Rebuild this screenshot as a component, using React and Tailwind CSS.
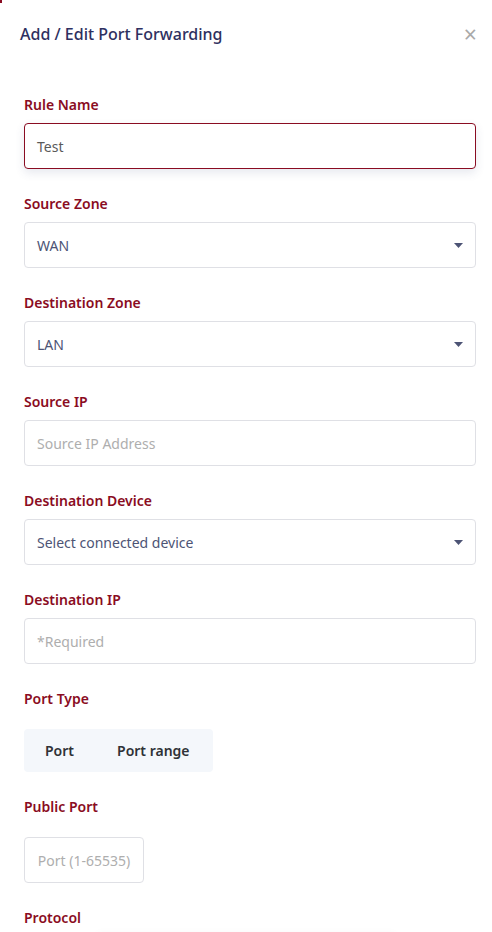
const Label = ({ children, className = "" }) => (
  <label className={`block text-[14px] font-semibold leading-5 text-[#8a0c22] ${className}`}>
    {children}
  </label>
);

const Caret = () => (
  <svg width="9" height="5" viewBox="0 0 9 5" className="text-[#4d5475]">
    <path d="M0 0h9L4.5 5z" fill="currentColor" />
  </svg>
);

const TextField = ({ placeholder, value, active }) => (
  <div
    className={`h-[46px] w-full rounded-[4px] border bg-white px-[12px] flex items-center text-[14px] ${
      active
        ? "border-[#8a0c22] shadow-[0_4px_10px_rgba(60,70,120,0.12)]"
        : "border-[#dfe0e5]"
    }`}
  >
    {value ? (
      <span className="text-[#5a5a5a]">{value}</span>
    ) : (
      <span className="text-[#aeaeae]">{placeholder}</span>
    )}
  </div>
);

const SelectField = ({ value }) => (
  <div className="h-[46px] w-full rounded-[4px] border border-[#dfe0e5] bg-white px-[12px] flex items-center justify-between text-[14px]">
    <span className="text-[#4d5475]">{value}</span>
    <Caret />
  </div>
);

const Field = ({ label, children }) => (
  <div className="flex flex-col gap-[8px]">
    <Label>{label}</Label>
    {children}
  </div>
);

export default function App() {
  return (
    <div
      className="relative h-[932px] w-full overflow-hidden bg-white"
      style={{ fontFamily: '"Noto Sans", "Open Sans", sans-serif' }}
    >
      <div className="absolute left-0 top-0 h-[3px] w-[2px] bg-[#8a0c22]" />

      <div className="flex items-center justify-between pl-[20px] pr-[15px] pt-[22px]">
        <h2 className="text-[16px] font-medium leading-6 text-[#2e3060]">
          Add / Edit Port Forwarding
        </h2>
        <button className="text-[23px] leading-none text-[#a9a9a9]">×</button>
      </div>

      <div className="flex flex-col gap-[25px] pt-[49px] pl-[24px] pr-[16px]">
        <Field label="Rule Name">
          <TextField value="Test" active />
        </Field>
        <Field label="Source Zone">
          <SelectField value="WAN" />
        </Field>
        <Field label="Destination Zone">
          <SelectField value="LAN" />
        </Field>
        <Field label="Source IP">
          <TextField placeholder="Source IP Address" />
        </Field>
        <Field label="Destination Device">
          <SelectField value="Select connected device" />
        </Field>
        <Field label="Destination IP">
          <TextField placeholder="*Required" />
        </Field>

        <div className="flex flex-col gap-[20px]">
          <Label>Port Type</Label>
          <div className="flex h-[43px] w-[189px] items-center rounded-[4px] bg-[#f4f7fb] text-[14px] font-semibold text-[#2f3237]">
            <span className="pl-[21px]">Port</span>
            <span className="pl-[43px]">Port range</span>
          </div>
        </div>

        <div className="flex flex-col gap-[20px]">
          <Label>Public Port</Label>
          <div className="h-[46px] w-[120px] rounded-[4px] border border-[#dfe0e5] flex items-center justify-center text-[14px] text-[#aeaeae]">
            Port (1-65535)
          </div>
        </div>

        <div className="flex flex-col gap-[9px]">
          <Label>Protocol</Label>
          <div className="ml-[72px] h-[40px] w-[300px] rounded-[6px] bg-white shadow-[0_-3px_8px_rgba(0,0,0,0.05)]" />
        </div>
      </div>
    </div>
  );
}
